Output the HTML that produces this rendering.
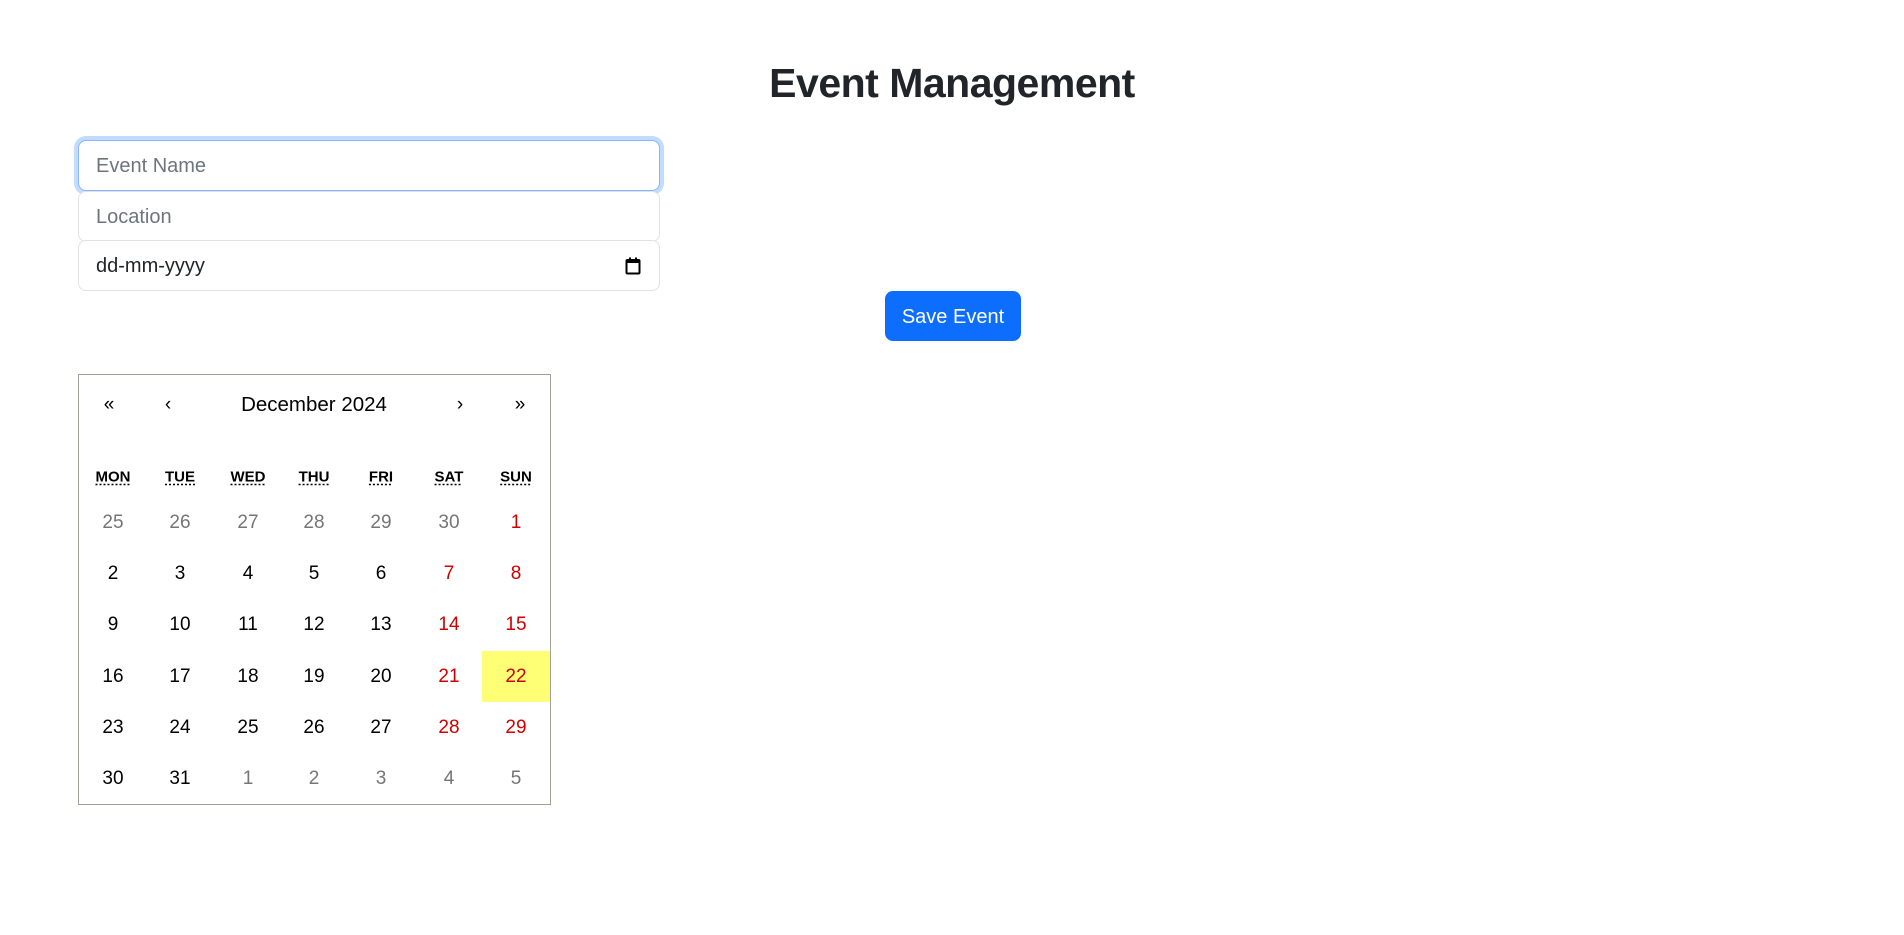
<!DOCTYPE html>
<html><head><meta charset="utf-8"><style>
*{box-sizing:border-box}
body{margin:0;width:1904px;height:935px;background:#fff;font-family:"Liberation Sans",sans-serif;color:#212529;position:relative;overflow:hidden}
h1{position:absolute;left:0;width:1904px;top:53px;margin:0;text-align:center;font-size:41px;font-weight:700;line-height:60px;letter-spacing:-0.5px}
.in{position:absolute;left:78px;width:582px;height:51px;border:1px solid #dee2e6;border-radius:8px;background:#fff;font-size:20px;padding:0 17px;line-height:51px;color:#6c757d}
.focus{border-color:#86b7fe;box-shadow:0 0 0 4px rgba(13,110,253,.25)}
.btn{position:absolute;left:885px;top:291px;width:136px;height:50px;background:#0d6efd;color:#fff;border-radius:8px;font-size:20px;line-height:52px;text-align:center}
.cal{position:absolute;left:78px;top:374px;width:473px;height:431px;border:1px solid #a0a096}
.c{position:absolute;transform:translate(-50%,-50%);white-space:nowrap;color:#000}
.n{font-size:19px}
.w{font-size:15px;font-weight:700;text-decoration:underline dotted;text-underline-offset:3px}
.g{color:#757575}.r{color:#d10000}
</style></head><body>
<h1>Event Management</h1>
<div class="in focus" style="top:140px">Event Name</div>
<div class="in" style="top:191px">Location</div>
<div class="in" style="top:240px;color:#212529">dd-mm-yyyy
<svg style="position:absolute;right:18px;top:16px" width="16" height="18" viewBox="0 0 16 18"><rect x="1.5" y="3" width="13" height="13.5" rx="1" fill="none" stroke="#000" stroke-width="2"/><rect x="1.5" y="3" width="13" height="3" fill="#000"/><rect x="4" y="0.5" width="2" height="3" fill="#000"/><rect x="10" y="0.5" width="2" height="3" fill="#000"/></svg></div>
<div class="btn">Save Event</div>
<div class="cal">
<div style="position:absolute;left:403px;top:276px;width:68px;height:51px;background:#ffff76"></div>
</div>
<div id="g"></div>
<script>
const g=document.getElementById('g');let h='';
const add=(x,y,t,cls,fs)=>{h+=`<div class="c ${cls}" style="left:${x}px;top:${y}px;${fs?'font-size:'+fs+'px':''}">${t}</div>`};
add(109,405,'«','n');add(168,405,'‹','n');add(314,405,'December 2024','n',20.5);
add(460,405,'›','n');add(520,405,'»','n');
const xs=[113,180,248,314,381,449,516];const ys=[523,574,625,677,728,779];
['MON','TUE','WED','THU','FRI','SAT','SUN'].forEach((d,i)=>add(xs[i],477,d,'w'));
const days=[25,26,27,28,29,30,1,2,3,4,5,6,7,8,9,10,11,12,13,14,15,16,17,18,19,20,21,22,23,24,25,26,27,28,29,30,31,1,2,3,4,5];
days.forEach((d,k)=>{const r=Math.floor(k/7),c=k%7;let cls='n';
 const other=(r==0&&c<6)||(r==5&&c>1);
 if(other)cls+=' g';else if(c>=5)cls+=' r';
 add(xs[c],ys[r],d,cls)});
g.innerHTML=h;
</script>
</body></html>
